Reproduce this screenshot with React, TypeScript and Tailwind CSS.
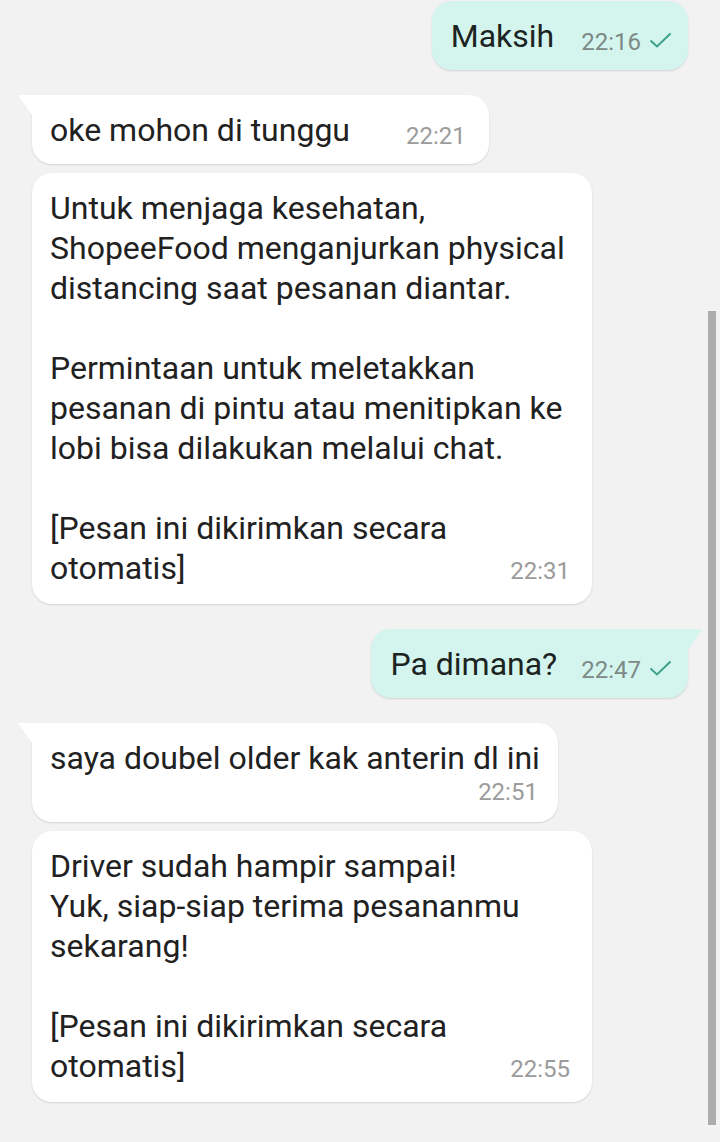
const font = { fontFamily: "Roboto, 'Noto Sans', Arial, sans-serif" };

function Check() {
  return (
    <svg width="23" height="17" viewBox="0 0 23 17" className="ml-[8px] mb-[7px]">
      <polyline points="1.5,8.5 8,14.5 21.5,1.5" fill="none" stroke="#3aa18d" strokeWidth="2" />
    </svg>
  );
}

function InTail() {
  return <div className="absolute top-0 -left-[14px] h-[21px] w-[15px] bg-white [clip-path:polygon(0_0,100%_0,100%_100%)]" />;
}

function OutTail() {
  return <div className="absolute top-0 -right-[14px] h-[23px] w-[15px] bg-[#d4f5ee] [clip-path:polygon(0_0,100%_0,0_100%)]" />;
}

const inBubble =
  "relative self-start ml-[32px] bg-white text-[#212121] shadow-[0_1px_2px_rgba(0,0,0,0.13)]";
const outBubble =
  "relative self-end mr-[32px] bg-[#d4f5ee] text-[#1c2422] shadow-[0_1px_2px_rgba(0,0,0,0.13)]";
const inTime = "text-[24px] leading-[28px] text-[#9b9b9b]";
const outTime = "text-[24px] leading-[28px] text-[#7c8986]";

export default function App() {
  return (
    <div className="relative min-h-[1142px] w-[720px] overflow-hidden bg-[#f2f2f2]" style={font}>
      <div className="flex flex-col pt-[1px] text-[32px] leading-[40px]">
        {/* outgoing */}
        <div className={`${outBubble} flex items-end rounded-[20px] pl-[19px] pr-[16px] pt-[15px] pb-[14px]`}>
          <span>Maksih</span>
          <span className={`${outTime} ml-[27px]`}>22:16</span>
          <Check />
        </div>

        <div className={`${inBubble} mt-[25px] flex items-end rounded-[20px] rounded-tl-none pl-[18px] pr-[23px] pt-[15px] pb-[14px]`}>
          <InTail />
          <span>oke mohon di tunggu</span>
          <span className={`${inTime} ml-[56px]`}>22:21</span>
        </div>

        <div className={`${inBubble} mt-[9px] w-[560px] rounded-[20px] pl-[18px] pr-[24px] pt-[15px] pb-[16px]`}>
          <div>Untuk menjaga kesehatan,</div>
          <div>ShopeeFood menganjurkan physical</div>
          <div>distancing saat pesanan diantar.</div>
          <div className="h-[40px]" />
          <div>Permintaan untuk meletakkan</div>
          <div>pesanan di pintu atau menitipkan ke</div>
          <div>lobi bisa dilakukan melalui chat.</div>
          <div className="h-[40px]" />
          <div>[Pesan ini dikirimkan secara</div>
          <div className="flex items-baseline justify-between">
            <span>otomatis]</span>
            <span className={`${inTime} mr-[-2px]`}>22:31</span>
          </div>
        </div>

        <div className={`${outBubble} mt-[25px] flex items-end rounded-[20px] rounded-tr-none pl-[19px] pr-[16px] pt-[15px] pb-[14px]`}>
          <OutTail />
          <span>Pa dimana?</span>
          <span className={`${outTime} ml-[24px]`}>22:47</span>
          <Check />
        </div>

        <div className={`${inBubble} mt-[25px] flex flex-col rounded-[20px] rounded-tl-none pl-[18px] pr-[18px] pt-[15px] pb-[16px]`}>
          <InTail />
          <span>saya doubel older kak anterin dl ini</span>
          <span className={`${inTime} self-end mr-[2px]`}>22:51</span>
        </div>

        <div className={`${inBubble} mt-[9px] w-[560px] rounded-[20px] pl-[18px] pr-[22px] pt-[15px] pb-[16px]`}>
          <div>Driver sudah hampir sampai!</div>
          <div>Yuk, siap-siap terima pesananmu</div>
          <div>sekarang!</div>
          <div className="h-[40px]" />
          <div>[Pesan ini dikirimkan secara</div>
          <div className="flex items-baseline justify-between">
            <span>otomatis]</span>
            <span className={inTime}>22:55</span>
          </div>
        </div>
      </div>

      {/* scrollbar */}
      <div className="absolute left-[708px] top-[311px] h-[814px] w-[8px] bg-[#adadad]" />
    </div>
  );
}
